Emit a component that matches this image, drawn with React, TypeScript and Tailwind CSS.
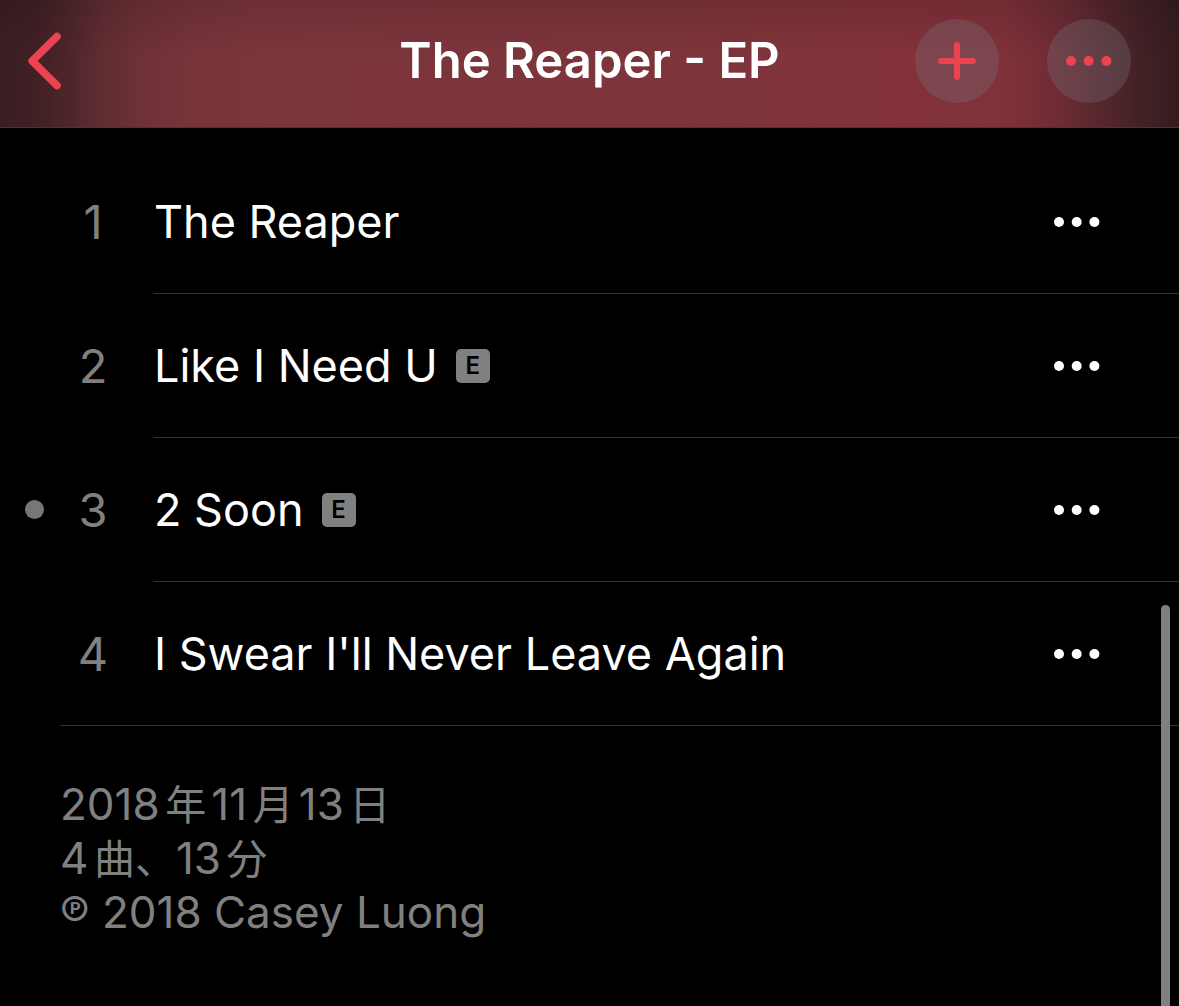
type Track = {
  number: number;
  title: string;
  explicit?: boolean;
  popular?: boolean;
};

const tracks: Track[] = [
  { number: 1, title: 'The Reaper' },
  { number: 2, title: 'Like I Need U', explicit: true },
  { number: 3, title: '2 Soon', explicit: true, popular: true },
  { number: 4, title: "I Swear I'll Never Leave Again" },
];

function DotsIcon() {
  return (
    <svg width="46" height="12" viewBox="0 0 46 12" fill="currentColor" aria-hidden="true">
      <circle cx="5" cy="6" r="5" />
      <circle cx="22.7" cy="6" r="5" />
      <circle cx="40.4" cy="6" r="5" />
    </svg>
  );
}

function Header() {
  return (
    <header className="grid h-32 grid-cols-[1fr_auto_1fr] items-center border-b border-[#4a3438] bg-[linear-gradient(to_bottom,rgba(0,0,0,0.12),rgba(0,0,0,0)_45%),linear-gradient(to_right,#3a1e22,#402024_3%,#4f262b_6%,#622d33_9%,#6e3137_12%,#76333a_16%,#7b353c_22%,#7c353c_30%,#7e343b_60%,#83323a_75%,#80313a_85%,#6d2c34_90%,#52262b_94%,#3c1f23_98%,#351c1f)] pb-1.5">
      <a href="#back" aria-label="Back" className="ml-7 justify-self-start text-[#eb4450]">
        <svg width="34" height="58" viewBox="0 0 34 58" fill="none" aria-hidden="true">
          <path d="M29 4.5 4.2 29 29 53.5" stroke="currentColor" strokeWidth="7.6" strokeLinecap="round" strokeLinejoin="round" />
        </svg>
      </a>
      <h1 className="text-[49px] leading-[60px] font-semibold">The Reaper - EP</h1>
      <div className="mr-12 flex gap-12 justify-self-end text-[#eb4450]">
        <button type="button" aria-label="Add" className="flex size-[84px] items-center justify-center rounded-full bg-[#787882]/30">
          <svg width="38" height="38" viewBox="0 0 38 38" aria-hidden="true">
            <path d="M19 3.2v31.6M3.2 19h31.6" stroke="currentColor" strokeWidth="6.2" strokeLinecap="round" />
          </svg>
        </button>
        <button type="button" aria-label="More" className="flex size-[84px] items-center justify-center rounded-full bg-[#787882]/30">
          <DotsIcon />
        </button>
      </div>
    </header>
  );
}

function TrackRow({ track, last }: { track: Track; last: boolean }) {
  return (
    <li>
      <div className="flex h-[143px] items-center pr-[79px]">
        <div className="flex w-[60px] shrink-0 pl-[25px]">
          {track.popular && <span className="size-[19px] rounded-full bg-[#77767b]" />}
        </div>
        <span className="w-[66px] shrink-0 text-center text-[47px] leading-[56px] text-[#808080]">
          {track.number}
        </span>
        <div className="flex flex-1 items-center gap-[18px] pl-7">
          <span className="text-[45px] leading-[56px]">{track.title}</span>
          {track.explicit && (
            <span className="flex size-[34px] items-center justify-center rounded-[5px] bg-[#808080] text-2xl font-semibold text-black">
              E
            </span>
          )}
        </div>
        <button type="button" aria-label={`More options for ${track.title}`}>
          <DotsIcon />
        </button>
      </div>
      <div className={last ? 'ml-[60px] h-px bg-[#333333]' : 'ml-[153px] h-px bg-[#333333]'} />
    </li>
  );
}

function Kanji({ children }: { children: string }) {
  return <span className="text-[41px] leading-none">{children}</span>;
}

export default function App() {
  return (
    <div className="relative min-h-screen bg-black font-['Inter','Noto_Sans_CJK_JP',sans-serif] text-white">
      <Header />
      <main>
        <ol className="pt-[22px]">
          {tracks.map((track, i) => (
            <TrackRow key={track.number} track={track} last={i === tracks.length - 1} />
          ))}
        </ol>
        <footer lang="ja" className="px-[60px] pt-[51px] text-[44px] leading-[54px] text-[#808080] [text-autospace:normal]">
          <p>
            2018<Kanji>年</Kanji>11<Kanji>月</Kanji>13<Kanji>日</Kanji>
          </p>
          <p>
            4<Kanji>曲、</Kanji>13<Kanji>分</Kanji>
          </p>
          <p>℗ 2018 Casey Luong</p>
        </footer>
      </main>

      {/* scroll indicator */}
      <div className="absolute top-[605px] right-[9px] bottom-0 w-[9px] rounded-t-full bg-[#808080]" />
    </div>
  );
}
